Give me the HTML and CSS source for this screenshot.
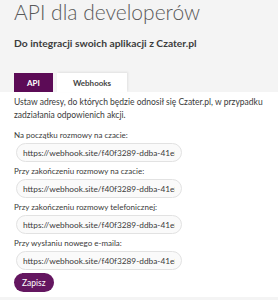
FILE: index.html
```html
<!DOCTYPE html>
<html lang="pl">
<head>
<meta charset="utf-8">
<link rel="stylesheet" href="styles.css">
</head>
<body>
<header class="head">
  <h1 class="title">API dla developerów</h1>
  <p class="subtitle">Do integracji swoich aplikacji z Czater.pl</p>
</header>
<nav class="tabs">
  <span class="tab tab-active">API</span>
  <span class="tab">Webhooks</span>
</nav>
<section class="panel">
  <p class="intro">Ustaw adresy, do których będzie odnosił się Czater.pl, w przypadku zadziałania odpowienich akcji.</p>
  <div class="field">
    <label class="label">Na początku rozmowy na czacie:</label>
    <input class="input" type="text" value="https://webhook.site/f40f3289-ddba-41e8-a1b2">
  </div>
  <div class="field">
    <label class="label">Przy zakończeniu rozmowy na czacie:</label>
    <input class="input" type="text" value="https://webhook.site/f40f3289-ddba-41e8-a1b2">
  </div>
  <div class="field">
    <label class="label">Przy zakończeniu rozmowy telefonicznej:</label>
    <input class="input" type="text" value="https://webhook.site/f40f3289-ddba-41e8-a1b2">
  </div>
  <div class="field">
    <label class="label">Przy wysłaniu nowego e-maila:</label>
    <input class="input" type="text" value="https://webhook.site/f40f3289-ddba-41e8-a1b2">
  </div>
  <button class="btn" type="button">Zapisz</button>
</section>
</body>
</html>
```
FILE: styles.css
```css
html, body {
  margin: 0;
  padding: 0;
  background: #f4f4f4;
  font-family: Lato, "Open Sans", sans-serif;
  color: #3a3a3a;
}
.head {
  padding: 0 14px;
}
.title {
  margin: 0;
  font-size: 21px;
  font-weight: 300;
  line-height: 24px;
  color: #595959;
}
.subtitle {
  margin: 12px 0 0;
  font-size: 10.3px;
  line-height: 14px;
  font-weight: 700;
  color: #3c3c3c;
}
.tabs {
  display: flex;
  gap: 4px;
  padding: 0 14px;
  margin-top: 23px;
}
.tab {
  display: flex;
  align-items: center;
  justify-content: center;
  height: 19px;
  padding: 0 16px;
  font-size: 8px;
  font-weight: 700;
  color: #444;
  background: #fff;
  box-shadow: 1px -1px 2px rgba(0,0,0,0.08);
}
.tab-active {
  background: #5c0b56;
  color: #fff;
  padding: 0 13px;
  box-shadow: none;
}
.panel {
  background: #fff;
  padding: 4px 8px 4px 14px;
  height: 197px;
}
.intro {
  margin: 0;
  font-size: 8.5px;
  line-height: 13px;
  color: #3a3a3a;
}
.field {
  margin-top: 8px;
  display: flex;
  flex-direction: column;
  align-items: flex-start;
}
.field + .field {
  margin-top: 4px;
}
.label {
  font-size: 8px;
  line-height: 11px;
  color: #3a3a3a;
}
.input {
  box-sizing: border-box;
  margin: 2px 0 0 2px;
  width: 166px;
  height: 19px;
  padding: 0 6px;
  border: 1px solid #e2e2e2;
  border-radius: 10px;
  background: #fafafa;
  font-family: Lato, sans-serif;
  font-size: 8.3px;
  color: #3a3a3a;
  outline: none;
}
.btn {
  display: block;
  margin-top: 3px;
  height: 19px;
  padding: 0 8px;
  border: none;
  border-radius: 10px;
  background: #641660;
  color: #fff;
  font-family: Lato, sans-serif;
  font-size: 8.5px;
}
```
